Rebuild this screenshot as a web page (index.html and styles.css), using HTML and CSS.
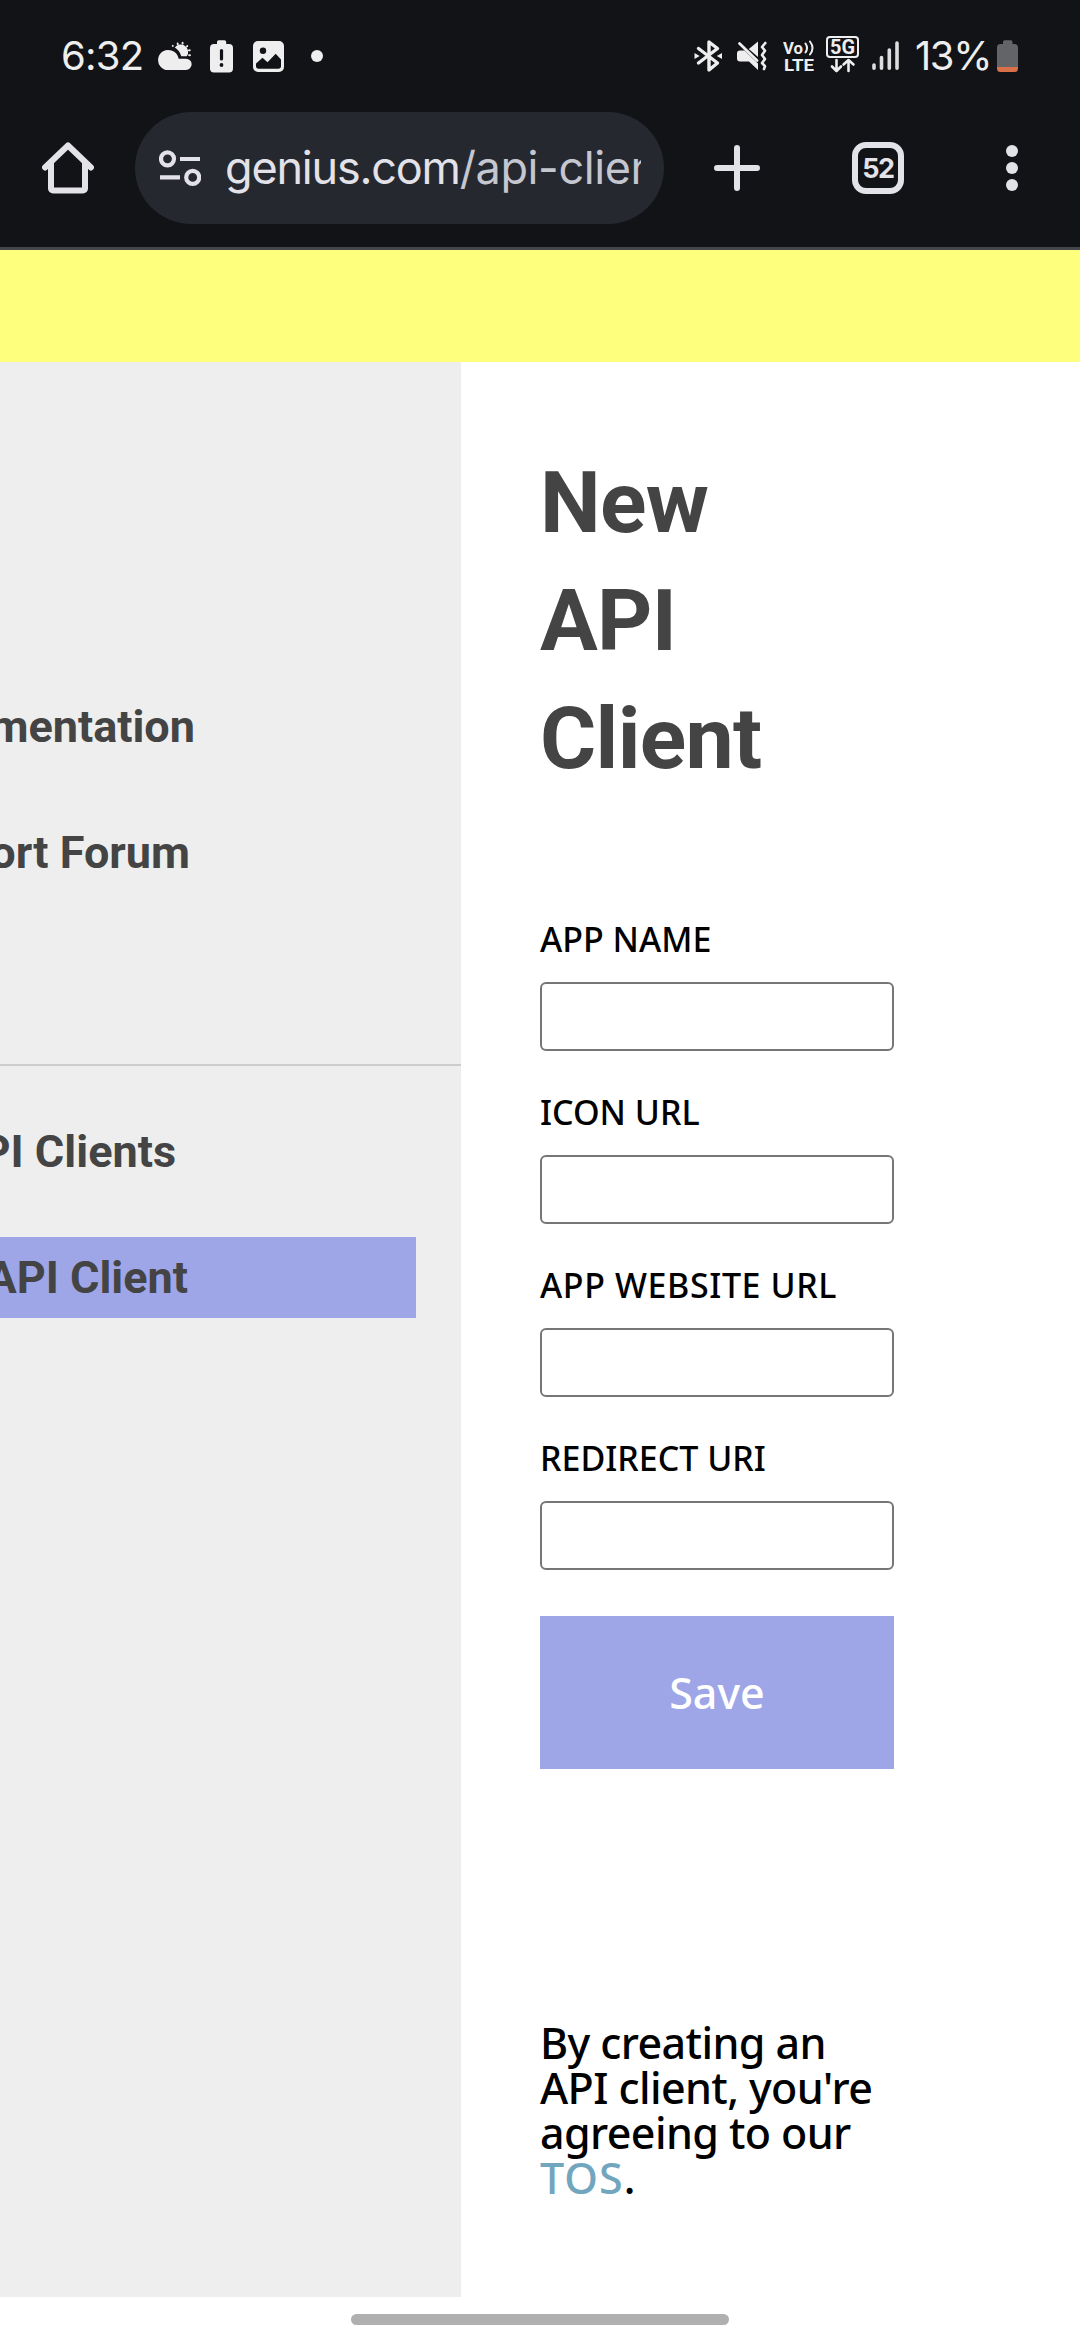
FILE: index.html
```html
<!DOCTYPE html>
<html lang="en">
<head>
<meta charset="utf-8">
<title>New API Client</title>
<link rel="stylesheet" href="styles.css">
</head>
<body>
<div class="screen">
  <header class="browser">
    <div class="status">
      <div class="status-left">
        <span class="clock">6:32</span>
        <svg class="icon" width="36" height="40" viewBox="157 36 36 40">
          <g stroke="#eee" stroke-width="1.9" stroke-linecap="round"><path d="M172.8 45.8l.1.1M177.6 43.4l.2.8M182.6 42.7v.8M187.3 46l-.4.5M189.8 50.2l-.9.2M190 55.3l-.9-.2"/></g>
          <path fill="#eee" d="M174.8 47.6a7.2 7.2 0 0 1 12 8.6h-5.6a14 14 0 0 0-6.4-8.600z"/>
          <path fill="#eee" d="M168 70a10 10 0 1 1 3.5-19.400c4 1.300 6.500 4.300 7.200 8.100H186a5.600 5.600 0 0 1 0 11.300z"/>
        </svg>
        <svg class="icon" width="23" height="40" viewBox="210 36 23 40">
          <path fill="#eee" d="M217 42a1.700 1.700 0 0 1 1.700-1.700h5.800a1.700 1.700 0 0 1 1.700 1.700v2h2.800a4 4 0 0 1 4 4v20.500a4 4 0 0 1-4 4h-15a4 4 0 0 1-4-4V48a4 4 0 0 1 4-4h3z"/>
          <path stroke="#121317" stroke-width="3.200" stroke-linecap="round" d="M221.500 50.500v8.500"/><circle cx="221.500" cy="65" r="1.900" fill="#121317"/>
        </svg>
        <svg class="icon" width="31" height="40" viewBox="253 36 31 40">
          <rect x="253" y="41" width="31" height="31" rx="5" fill="#eee"/>
          <circle cx="263" cy="50.800" r="3.200" fill="#121317"/>
          <path fill="#121317" d="M256 63.500l6.500-5.800 5 4.500 8.200-8.400 5.300 5.700v6.500a2.700 2.700 0 0 1-2.700 2.700h-19.600a2.700 2.700 0 0 1-2.700-2.700z"/>
        </svg>
        <svg class="icon" width="12" height="12" viewBox="0 0 12 12"><circle cx="6" cy="6" r="6" fill="#eee"/></svg>
      </div>
      <div class="status-right">
        <svg class="icon" width="28" height="40" viewBox="694 36 28 40">
          <path fill="none" stroke="#eee" stroke-width="3.400" stroke-linejoin="round" stroke-linecap="round" d="M698.500 48.500l19 14.500-8.500 7V42l8.500 6.500-19 14.500"/>
          <path fill="#eee" d="M694.500 53l5.200 3-5.200 3zM722 53l-5.200 3 5.200 3z"/>
        </svg>
        <svg class="icon" width="30" height="40" viewBox="737 36 30 40">
          <path fill="#eee" d="M737 53.500a3 3 0 0 1 3-3h4.500L758 63.500V70l-9-8.500h-9a3 3 0 0 1-3-3zM748.800 49l9.200-7.500V57z"/>
          <path fill="none" stroke="#eee" stroke-width="2.800" stroke-linecap="round" stroke-linejoin="round" d="M739.500 43.500L757 60.500"/>
          <path fill="none" stroke="#eee" stroke-width="2.600" stroke-linecap="round" stroke-linejoin="round" d="M765.300 43l-3.300 4 3 3.800-3 4.200 3 4-3 4 3 3.200-1 2.800"/>
        </svg>
        <svg class="icon" width="33" height="40" viewBox="783 36 33 40">
          <text class="tiny" x="783" y="54" textLength="20" lengthAdjust="spacingAndGlyphs">Vo</text>
          <text class="tiny" x="784" y="71" textLength="30" lengthAdjust="spacingAndGlyphs">LTE</text>
          <path fill="none" stroke="#eee" stroke-width="2" stroke-linecap="round" d="M805.500 43.500q3 4.500 0 9M810 41.500q5 6.500 0 13"/>
        </svg>
        <svg class="icon" width="34" height="40" viewBox="826 36 34 40">
          <rect x="827" y="37" width="31" height="20" rx="3" fill="none" stroke="#eee" stroke-width="2"/>
          <text class="net" x="830" y="54" textLength="25" lengthAdjust="spacingAndGlyphs">5G</text>
          <path fill="none" stroke="#eee" stroke-width="2.600" stroke-linecap="round" stroke-linejoin="round" d="M836.500 60v11M832 66.500l4.500 4.500 4.500-4.500M848.500 71V60M843.500 64.500l5-4.500 5 4.500"/>
        </svg>
        <svg class="icon" width="29" height="40" viewBox="871 36 29 40">
          <path stroke="#ddd" stroke-width="3.600" stroke-linecap="round" d="M874 65v3.200M881.500 57.500v10.700M889.300 50v18.200M897 43v25.200"/>
        </svg>
        <span class="percent">13%</span>
        <svg class="icon" width="21" height="40" viewBox="997 36 21 40">
          <path fill="#636466" d="M1003 41.800a1.500 1.500 0 0 1 1.500-1.500h6.500a1.500 1.500 0 0 1 1.500 1.500V44h2a3.500 3.500 0 0 1 3.500 3.500V67h-21V47.500A3.500 3.500 0 0 1 1000.500 44h2.500z"/>
          <path fill="#d9704a" d="M997 67h21v1.500a3.500 3.500 0 0 1-3.500 3.500h-14a3.500 3.500 0 0 1-3.500-3.500z"/>
        </svg>
      </div>
    </div>
    <div class="toolbar">
      <svg class="icon home" width="52" height="52" viewBox="42 142 52 52">
        <path fill="none" stroke="#e3e2e9" stroke-width="6" stroke-linejoin="round" stroke-linecap="round" d="M45 167.500L68 145.500 91 167.500M51 162v26.500a2 2 0 0 0 2 2h30a2 2 0 0 0 2-2V162"/>
      </svg>
      <div class="omnibox">
        <svg class="icon" width="42" height="36" viewBox="159 150 42 36">
          <g fill="none" stroke="#e3e2e9" stroke-width="4.200"><circle cx="167.500" cy="158.800" r="6.500"/><circle cx="192.700" cy="177.400" r="6.500"/><path d="M180 159h20M160 177.300h20"/></g>
        </svg>
        <div class="url"><span class="host">genius.com</span>/api-clients</div>
      </div>
      <svg class="icon plus" width="46" height="46" viewBox="0 0 46 46"><path stroke="#e3e2e9" stroke-width="6" stroke-linecap="round" d="M3 23h40M23 3v40"/></svg>
      <div class="tabs">52</div>
      <svg class="icon menu" width="12" height="46" viewBox="0 0 12 46"><g fill="#e3e2e9"><circle cx="6" cy="6" r="6"/><circle cx="6" cy="23" r="6"/><circle cx="6" cy="40" r="6"/></g></svg>
    </div>
  </header>
  <div class="banner"></div>
  <div class="page">
    <nav class="sidebar">
      <div class="links">
        <a class="link">Documentation</a>
        <a class="link">Support Forum</a>
      </div>
      <div class="links own">
        <a class="link">All API Clients</a>
        <a class="link active">New API Client</a>
      </div>
    </nav>
    <main class="content">
      <h1 class="title">New API Client</h1>
      <form class="form">
        <label class="field"><span>APP NAME</span><input class="input" type="text"></label>
        <label class="field"><span>ICON URL</span><input class="input" type="text"></label>
        <label class="field"><span class="wide">APP WEBSITE URL</span><input class="input" type="text"></label>
        <label class="field"><span>REDIRECT URI</span><input class="input" type="text"></label>
        <button class="save" type="button">Save</button>
      </form>
      <p class="terms">By creating an API client, you're agreeing to our <a class="tos">TOS</a>.</p>
    </main>
  </div>
  <footer class="gesture"><div class="handle"></div></footer>
</div>
</body>
</html>
```

FILE: styles.css
```css
* { box-sizing: border-box; }
body { margin: 0; background: #fff; }
.screen { display: flex; flex-direction: column; width: 1080px; height: 2340px; overflow: hidden; background: #fff; }
.icon { display: block; flex: none; }

.browser { height: 250px; flex: none; background: #121317; border-bottom: 3px solid #44474e; font-family: Inter, sans-serif; }
.status { display: flex; justify-content: space-between; height: 112px; padding: 0 62px 0 61px; color: #eee; }
.status-left, .status-right { display: flex; align-items: center; }
.clock { width: 96px; font-size: 40px; line-height: 40px; letter-spacing: -0.8px; white-space: nowrap; }
.status-left .icon + .icon { margin-left: 17px; }
.status-left .icon + .icon ~ .icon { margin-left: 20px; }
.status-left .icon:last-child { margin-left: 27px !important; }
.status-right .icon + .icon { margin-left: 15px; }
.status-right .icon:nth-child(3) { margin-left: 16px; }
.status-right .icon:nth-child(4) { margin-left: 10px; }
.status-right .icon:nth-child(5) { margin-left: 11px; }
.percent { width: 82px; margin: 0 0 0 15px; font-size: 40px; line-height: 40px; letter-spacing: -1.4px; white-space: nowrap; }
.tiny { font: 700 17px Roboto, sans-serif; fill: #eee; }
.net { font: 700 19.5px Roboto, sans-serif; fill: #eee; }

.toolbar { display: flex; align-items: center; height: 112px; }
.home { margin-left: 42px; }
.omnibox { display: flex; align-items: center; width: 529px; height: 112px; margin-left: 41px; padding: 0 23px 0 24px; border-radius: 56px; background: #262830; }
.url { flex: 1; min-width: 0; margin-left: 24px; overflow: hidden; font-size: 45px; line-height: 64px; letter-spacing: -0.4px; white-space: nowrap; color: #c4c6d0; }
.host { letter-spacing: -1.2px; color: #e3e2e9; }
.plus { margin-left: 50px; }
.tabs { display: flex; align-items: center; justify-content: center; width: 52px; height: 52px; margin-left: 92px; border: 6px solid #e3e2e9; border-radius: 14px; color: #e3e2e9; font-size: 27px; font-weight: 700; letter-spacing: -1.5px; }
.menu { margin-left: 102px; }

.banner { height: 112px; flex: none; background: #ffff7e; }
.page { display: flex; height: 1935px; flex: none; }
.sidebar { width: 461px; background: #eee; color: #444; font: 700 45px/81px Roboto, sans-serif; overflow: hidden; }
.links { display: flex; flex-direction: column; align-items: flex-start; gap: 45px; height: 702px; padding-top: 324px; }
.own { height: auto; padding-top: 45px; border-top: 2px solid #ccc; }
.link { display: flex; justify-content: flex-end; width: 195px; height: 81px; white-space: nowrap; }
.link:last-child { width: 190px; }
.own .link { width: 176px; }
.own .active { width: 416px; padding-right: 228px; background: #9ea6e8; }

.content { width: 354px; margin-left: 79px; font-family: "Noto Sans", sans-serif; font-weight: 500; color: #000; }
.title { width: 240px; margin: 82px 0 0; color: #444; font: 700 86px/118px Roboto, sans-serif; letter-spacing: -0.7px; }
.form { display: flex; flex-direction: column; gap: 45px; margin-top: 125px; }
.field { display: flex; flex-direction: column; gap: 26px; height: 128px; font-size: 34px; line-height: 33px; white-space: nowrap; }
.wide { letter-spacing: 0.6px; }
.input { width: 354px; height: 69px; border: 2px solid #767676; border-radius: 6px; background: #fff; }
.save { height: 153px; margin-top: 1px; padding: 0; border: 0; background: #9ea6e8; color: #fff; font: 500 43px/50px "Noto Sans", sans-serif; }
.terms { margin: 251px 0 0; font-size: 43px; line-height: 45px; letter-spacing: -0.6px; }
.tos { color: #72a5be; letter-spacing: 1px; }

.gesture { display: flex; justify-content: center; padding-top: 17px; }
.handle { width: 378px; height: 11px; border-radius: 6px; background: #b0b0b0; }
```
